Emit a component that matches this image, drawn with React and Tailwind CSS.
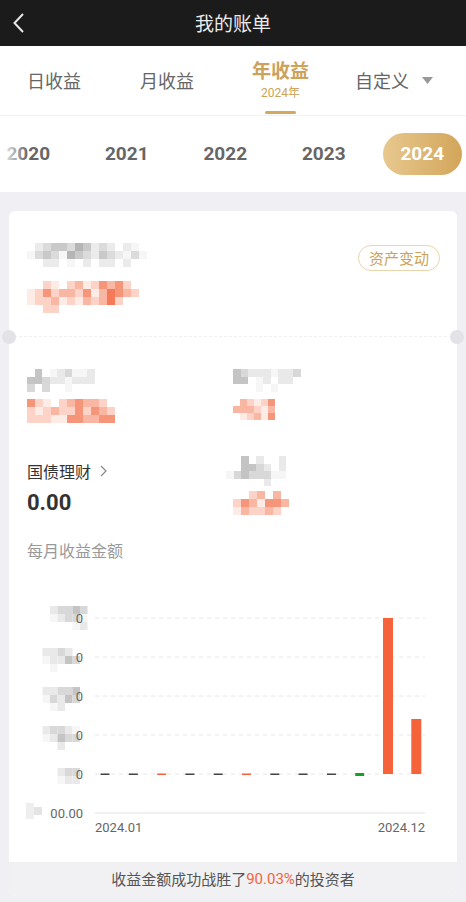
import React from 'react';

const CN = { fontFamily: '"Noto Sans CJK SC", "Noto Sans", sans-serif' };
const NUM = { fontFamily: 'Roboto, "Noto Sans CJK SC", sans-serif' };

const PALETTE = {
  a: '#f6f6f6', b: '#e9e9e9', c: '#d8d8d8', d: '#c4c4c4', e: '#adadad',
  p: '#fdece6', q: '#fcd3c6', r: '#f9b7a3', s: '#f5967b', t: '#f47a58',
};

// blurred (mosaic) block, 8px cells
const Mosaic = ({ rows, size = 8, className = '' }) => (
  <div className={`flex flex-col ${className}`}>
    {rows.map((row, i) => (
      <div key={i} className="flex">
        {row.split('').map((ch, j) => (
          <div
            key={j}
            style={{ width: size, height: size, background: PALETTE[ch] || 'transparent' }}
          />
        ))}
      </div>
    ))}
  </div>
);

const months = Array.from({ length: 12 }, (_, i) => 96 + 28.3 * i);
const zeroColors = ['#444', '#444', '#f4633a', '#444', '#444', '#f4633a', '#444', '#444', '#444', '#1a9e2e'];

const Chart = () => {
  const grid = [39, 78, 117, 156, 195];
  const ymos = [
    { y: 27, rows: ['00bccdc', '00abcca', '00000ab'] },
    { y: 69, rows: ['0bbcb0', '0abbdc', '00a000'] },
    { y: 108, rows: ['0bbccd', '0acbdc', '00ab00'] },
    { y: 147, rows: ['0bccba', '0abdcc', '000b00'] },
    { y: 189, rows: ['000bcc', '000abb'] },
  ];
  return (
    <svg width="448" height="282" viewBox="0 0 448 282" className="block">
      {ymos.map((m, k) =>
        m.rows.map((row, i) =>
          row.split('').map((ch, j) =>
            PALETTE[ch] ? (
              <rect key={`${k}-${i}-${j}`} x={26 + j * 7.5} y={m.y + i * 8} width="7.5" height="8" fill={PALETTE[ch]} />
            ) : null
          )
        )
      )}
      {grid.map((y) => (
        <text key={y} x="74" y={y + 5} textAnchor="end" fontSize="13" fill="#666" style={NUM}>0</text>
      ))}
      <rect x="17" y="224" width="8" height="16" fill="#eeeeee" />
      <rect x="25" y="228" width="8" height="8" fill="#e4e4e4" />
      <text x="74" y="239" textAnchor="end" fontSize="13" fill="#666" style={NUM}>00.00</text>
      {grid.map((y) => (
        <line key={y} x1="86" x2="416" y1={y} y2={y} stroke="#e6e6e6" strokeWidth="1" strokeDasharray="4 4" />
      ))}
      <line x1="86" x2="416" y1="234" y2="234" stroke="#e2e2e2" strokeWidth="1" />
      {zeroColors.map((c, i) => (
        <rect key={i} x={months[i] - 4.5} y={c === '#1a9e2e' ? 194 : 194.5} width="9" height={c === '#1a9e2e' ? 3 : 1.5} fill={c} />
      ))}
      <rect x={months[10] - 5} y="39" width="10" height="156" fill="#f4633a" />
      <rect x={months[11] - 5} y="140" width="10" height="55" fill="#f4633a" />
      <text x="86" y="253" fontSize="13" fill="#666" style={NUM}>2024.01</text>
      <text x="416" y="253" textAnchor="end" fontSize="13" fill="#666" style={NUM}>2024.12</text>
    </svg>
  );
};

const years = ['2020', '2021', '2022', '2023', '2024'];

export default function App() {
  return (
    <div className="relative w-[466px] h-[902px] bg-[#efeff4] overflow-hidden" style={CN}>
      {/* top bar */}
      <header className="relative h-[46px] bg-[#1b1b1b] flex items-center justify-center">
        <svg className="absolute left-[12px] top-[13px]" width="14" height="20" viewBox="0 0 14 20">
          <path d="M11 1 L2.5 10 L11 19" fill="none" stroke="#e6e6e6" strokeWidth="2" />
        </svg>
        <span className="text-[19px] text-[#ebebeb]">我的账单</span>
      </header>

      {/* period tabs */}
      <div className="h-[70px] bg-white flex items-stretch border-b border-[#f1f1f1] pl-[27px]">
        <div className="flex items-center text-[18px] text-[#666] w-[113px]">日收益</div>
        <div className="flex items-center text-[18px] text-[#666] w-[112px]">月收益</div>
        <div className="relative flex flex-col items-center w-[57px] pt-[10px]">
          <span className="text-[19px] leading-[27px] font-bold text-[#cda25a]">年收益</span>
          <span className="text-[12px] leading-[16px] text-[#cda25a] mt-[2px]" style={NUM}>2024年</span>
          <div className="absolute bottom-[1px] left-[13px] w-[31px] h-[3px] rounded-full bg-[#d4a85f]" />
        </div>
        <div className="flex items-center ml-[46px] text-[18px] text-[#666]">
          自定义
          <svg className="ml-[13px]" width="11" height="7" viewBox="0 0 11 7">
            <path d="M0 0 H11 L5.5 7 Z" fill="#999" />
          </svg>
        </div>
      </div>

      {/* year scroller */}
      <div className="relative h-[76px] bg-white flex items-center overflow-hidden">
        <div className="flex items-center ml-[-21px]">
          {years.map((y) =>
            y === '2024' ? (
              <div key={y} className="w-[98.5px] shrink-0 flex justify-center">
                <div className="w-[79px] h-[42px] rounded-full bg-gradient-to-r from-[#e7c88e] to-[#d3a55a] flex items-center justify-center text-white text-[19px] font-bold" style={NUM}>
                  {y}
                </div>
              </div>
            ) : (
              <div key={y} className="w-[98.5px] shrink-0 flex justify-center text-[19px] font-bold text-[#666]" style={NUM}>
                {y}
              </div>
            )
          )}
        </div>
        <div className="absolute left-0 top-0 h-full w-[28px] bg-gradient-to-r from-white to-transparent" />
      </div>

      {/* card */}
      <div className="pt-[19px] px-[9px] pb-[6px]">
        <div className="relative bg-white rounded-[6px] overflow-hidden h-[685px] flex flex-col">
          <div className="h-[126px] px-[18px] pt-[32px] relative border-b border-dashed border-[#f0f0f0]">
            <Mosaic rows={['0bcddcedbcb0ba0', 'acdcaedcbdcbaca', '00bb0a0b0bb0b0']} className="opacity-90" />
            <Mosaic className="mt-[14px]" rows={['00qp0qrpqsrsq0', 'pqsqrrqsprtsrq', 'pqqrpqprqrtq00', '00qq0000000000']} />
            <div className="absolute right-[17px] top-[34px] h-[26px] px-[10px] rounded-full border border-[#ead5ab] text-[15px] text-[#cda25a] flex items-center">
              资产变动
            </div>
          </div>

          <div className="flex-1 flex flex-col">
            <div className="grid grid-cols-[206px_1fr] pl-[18px] mt-[32px] h-[22px]">
              <Mosaic rows={['0d0abcaab', 'ddcbbabbb', 'c0c00a0']} size={7.5} />
              <Mosaic rows={['dcbbbabbc', 'dd0ab0bb', '000a0a']} size={7.5} />
            </div>
            <div className="grid grid-cols-[206px_1fr] pl-[18px] mt-[8px] h-[26px]">
              <Mosaic rows={['sqp0qrsrrq0', 'qpqrqqsqsrq', 'qqqppssrrss']} size={8} />
              <Mosaic rows={['0rqpqs', 'rrrqpr', '0pqrps']} size={7} />
            </div>
            <div className="grid grid-cols-[206px_1fr] pl-[18px] mt-[31px] h-[22px] items-center">
              <div className="flex items-center text-[16px] text-[#333]">
                国债理财
                <svg className="ml-[9px]" width="7" height="12" viewBox="0 0 7 12">
                  <path d="M1 1 L6 6 L1 11" fill="none" stroke="#888" strokeWidth="1.2" />
                </svg>
              </div>
              <Mosaic className="ml-[-7px]" rows={['00d0b00b', '00ddcb0b', 'acdcccaa', '00000b']} size={7.5} />
            </div>
            <div className="grid grid-cols-[206px_1fr] pl-[18px] mt-[13px] h-[24px] items-center">
              <span className="text-[22px] font-bold text-[#333] leading-[24px]" style={NUM}>0.00</span>
              <Mosaic rows={['00qr0r0', 'qsrpssr', 'prqqrq0']} size={8} />
            </div>
            <div className="pl-[18px] mt-[24px] h-[22px] flex items-center text-[16px] text-[#999]">每月收益金额</div>
            <div className="mt-[18px]">
              <Chart />
            </div>
          </div>

          <div className="h-[34px] bg-[#f1f1f4] flex items-center justify-center text-[15px] text-[#555]">
            收益金额成功战胜了<span className="text-[#f4633a]" style={NUM}>90.03%</span>的投资者
          </div>
        </div>
      </div>

      {/* ticket notches */}
      <div className="absolute left-[2px] top-[330px] w-[14px] h-[14px] rounded-full bg-[#e3e3e7]" />
      <div className="absolute left-[450px] top-[330px] w-[14px] h-[14px] rounded-full bg-[#e3e3e7]" />
    </div>
  );
}
